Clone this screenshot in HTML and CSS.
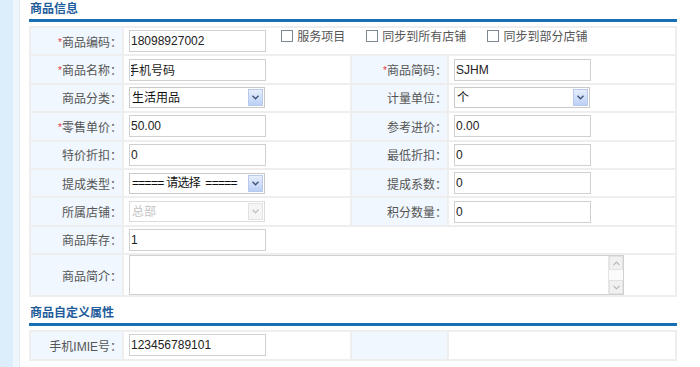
FILE: index.html
```html
<!DOCTYPE html>
<html>
<head>
  <meta charset="utf-8">
  <title>商品信息</title>
  <link rel="stylesheet" href="styles.css">
</head>
<body>
  <div class="page">
    <aside class="rail">
      <div class="rail-a"></div>
      <div class="rail-b"></div>
    </aside>

    <main class="content">
      <h2 class="sec-title">商品信息</h2>
      <table class="form-table">
        <colgroup>
          <col class="c-label">
          <col class="c-value">
          <col class="c-label2">
          <col>
        </colgroup>
        <tr>
          <td class="lbl"><span class="req">*</span>商品编码：</td>
          <td colspan="3">
            <input class="txt" type="text" value="18098927002">
            <span class="checks">
              <label class="chk"><input type="checkbox">服务项目</label>
              <label class="chk"><input type="checkbox">同步到所有店铺</label>
              <label class="chk"><input type="checkbox">同步到部分店铺</label>
            </span>
          </td>
        </tr>
        <tr>
          <td class="lbl"><span class="req">*</span>商品名称：</td>
          <td><input class="txt txt-name" type="text" value="手机号码"></td>
          <td class="lbl"><span class="req">*</span>商品简码：</td>
          <td><input class="txt" type="text" value="SJHM"></td>
        </tr>
        <tr>
          <td class="lbl">商品分类：</td>
          <td>
            <span class="sel">
              <select><option>生活用品</option></select>
              <span class="arr"><svg width="7" height="5" viewBox="0 0 7 5"><path d="M0.5 0.8 L3.5 3.8 L6.5 0.8" fill="none" stroke="#3f5378" stroke-width="1.4"/></svg></span>
            </span>
          </td>
          <td class="lbl">计量单位：</td>
          <td>
            <span class="sel">
              <select><option>个</option></select>
              <span class="arr"><svg width="7" height="5" viewBox="0 0 7 5"><path d="M0.5 0.8 L3.5 3.8 L6.5 0.8" fill="none" stroke="#3f5378" stroke-width="1.4"/></svg></span>
            </span>
          </td>
        </tr>
        <tr>
          <td class="lbl"><span class="req">*</span>零售单价：</td>
          <td><input class="txt" type="text" value="50.00"></td>
          <td class="lbl">参考进价：</td>
          <td><input class="txt" type="text" value="0.00"></td>
        </tr>
        <tr>
          <td class="lbl">特价折扣：</td>
          <td><input class="txt" type="text" value="0"></td>
          <td class="lbl">最低折扣：</td>
          <td><input class="txt" type="text" value="0"></td>
        </tr>
        <tr>
          <td class="lbl">提成类型：</td>
          <td>
            <span class="sel sel-tight">
              <select><option>===== 请选择&nbsp; =====</option></select>
              <span class="arr"><svg width="7" height="5" viewBox="0 0 7 5"><path d="M0.5 0.8 L3.5 3.8 L6.5 0.8" fill="none" stroke="#3f5378" stroke-width="1.4"/></svg></span>
            </span>
          </td>
          <td class="lbl">提成系数：</td>
          <td><input class="txt" type="text" value="0"></td>
        </tr>
        <tr>
          <td class="lbl">所属店铺：</td>
          <td>
            <span class="sel sel-off">
              <select disabled><option>总部</option></select>
              <span class="arr"><svg width="7" height="5" viewBox="0 0 7 5"><path d="M0.5 0.8 L3.5 3.8 L6.5 0.8" fill="none" stroke="#c4c4c4" stroke-width="1.4"/></svg></span>
            </span>
          </td>
          <td class="lbl">积分数量：</td>
          <td><input class="txt" type="text" value="0"></td>
        </tr>
        <tr>
          <td class="lbl">商品库存：</td>
          <td colspan="3"><input class="txt" type="text" value="1"></td>
        </tr>
        <tr class="row-tall">
          <td class="lbl">商品简介：</td>
          <td colspan="3">
            <div class="area">
              <textarea></textarea>
              <div class="vbar">
                <span class="vbtn"><svg width="7" height="5" viewBox="0 0 7 5"><path d="M0.5 4.2 L3.5 1.2 L6.5 4.2" fill="none" stroke="#b8b8b8" stroke-width="1.2"/></svg></span>
                <span class="vbtn"><svg width="7" height="5" viewBox="0 0 7 5"><path d="M0.5 0.8 L3.5 3.8 L6.5 0.8" fill="none" stroke="#b8b8b8" stroke-width="1.2"/></svg></span>
              </div>
            </div>
          </td>
        </tr>
      </table>

      <h2 class="sec-title sec-next">商品自定义属性</h2>
      <table class="form-table">
        <colgroup>
          <col class="c-label">
          <col class="c-value">
          <col class="c-label2">
          <col>
        </colgroup>
        <tr>
          <td class="lbl">手机IMIE号：</td>
          <td><input class="txt" type="text" value="123456789101"></td>
          <td class="lbl"></td>
          <td></td>
        </tr>
      </table>

      
      <div class="actions">
        <button class="btn btn-save" type="button" aria-label="保存"></button>
        <button class="btn btn-back" type="button" aria-label="返回"></button>
      </div>
    </main>
  </div>
</body>
</html>
```

FILE: styles.css
```css
body {
  margin: 0;
  font-family: "Liberation Sans", "Noto Sans CJK SC", sans-serif;
  font-size: 12px;
  color: #555;
  background: #fff;
}

.page {
  display: flex;
  min-height: 100vh;
}

.rail {
  display: flex;
  flex-shrink: 0;
}

.rail-a {
  width: 13px;
  background: #dcedfc;
}

.rail-b {
  width: 6px;
  background: #eef6fd;
  border-right: 1px solid #e4edf5;
}

.content {
  width: 648px;
  padding-left: 9px;
}

.sec-title {
  margin: 0 0 4px;
  padding-left: 1px;
  font-size: 12px;
  font-weight: bold;
  line-height: 19px;
  color: #1e5c9b;
  border-bottom: 3px solid #1a6fb4;
}

.sec-next {
  margin-top: 7px;
}

.form-table {
  width: 648px;
  border-collapse: collapse;
  table-layout: fixed;
}

.c-label {
  width: 93px;
}

.c-value {
  width: 228px;
}

.c-label2 {
  width: 97px;
}

.form-table td {
  height: 26.4px;
  padding: 0 5px;
  border: 2px solid #eeeeee;
  white-space: nowrap;
}

.form-table td.lbl {
  text-align: right;
  padding: 0 0 0 4px;
  background: #f0f7fe;
  color: #555;
}

.req {
  color: #e4393c;
  font-size: 10px;
  vertical-align: 1px;
}

.txt {
  width: 137px;
  height: 22px;
  box-sizing: border-box;
  padding: 0 1px;
  border: 1px solid #d0d0d0;
  font-family: "Liberation Sans", "Noto Sans CJK SC", sans-serif;
  font-size: 12px;
  color: #222;
  vertical-align: middle;
  outline: none;
}

.txt-name {
  text-indent: -4px;
}

.checks {
  display: inline-flex;
  gap: 21px;
  margin-left: 12px;
  vertical-align: top;
  margin-top: -3px;
}

.chk {
  display: inline-flex;
  align-items: center;
  gap: 4px;
  color: #555;
}

.chk input {
  appearance: none;
  width: 12px;
  height: 12px;
  margin: 0;
  border: 1px solid #7d8896;
  background: #fff;
}

.sel {
  display: inline-flex;
  width: 136px;
  height: 21px;
  box-sizing: border-box;
  border: 1px solid #c9c9c9;
  background: #fff;
  vertical-align: middle;
}

.sel select {
  appearance: none;
  flex: 1;
  min-width: 0;
  border: 0;
  padding: 0 2px;
  background: transparent;
  font-family: "Liberation Sans", "Noto Sans CJK SC", sans-serif;
  font-size: 12px;
  color: #111;
  outline: none;
}

.sel-tight select {
  letter-spacing: -0.7px;
}

.arr {
  display: flex;
  align-items: center;
  justify-content: center;
  width: 13px;
  margin: 1px;
  border: 1px solid #b7c9ee;
  background: linear-gradient(#e6eefc, #bcd0f6);
}

.sel-off {
  border-color: #dcdcdc;
}

.sel-off select {
  color: #aaa;
}

.sel-off .arr {
  border-color: #e2e2e2;
  background: #f5f5f5;
}

.row-tall td {
  height: 39px;
}

.area {
  display: flex;
  width: 495px;
  height: 40px;
  box-sizing: border-box;
  border: 1px solid #d0d0d0;
}

.area textarea {
  flex: 1;
  border: 0;
  resize: none;
  outline: none;
}

.vbar {
  display: flex;
  flex-direction: column;
  justify-content: space-between;
  width: 14px;
  border-left: 1px solid #e6e6e6;
  background: #fbfbfb;
}

.vbtn {
  display: flex;
  align-items: center;
  justify-content: center;
  height: 12px;
  background: #f1f1f1;
  border: 1px solid #e2e2e2;
}

.actions {
  display: flex;
  justify-content: center;
  gap: 4px;
  margin-top: 6px;
}

.btn {
  width: 66px;
  height: 32px;
  border: 0;
}

.btn-save {
  background: #2fa9ea;
}

.btn-back {
  background: #6dc231;
}
```
